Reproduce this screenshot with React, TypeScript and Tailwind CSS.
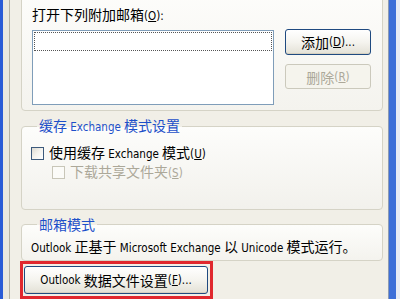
import React from "react";

const CJK = /([\u2E80-\u9FFF\u3000-\u303F\uFF00-\uFFEF]+)/;

function T({ s }: { s: string }) {
  const parts = s.split(CJK).filter((p) => p !== "");
  return (
    <>
      {parts.map((p, i) =>
        CJK.test(p) ? (
          <span key={i} className="text-[14px] font-['Noto_Sans_CJK_SC',sans-serif]">
            {p}
          </span>
        ) : (
          <span key={i} className="text-[11.5px] font-['DejaVu_Sans_Condensed','Liberation_Sans',sans-serif] whitespace-pre">
            {p}
          </span>
        )
      )}
    </>
  );
}

function L({ children }: { children: React.ReactNode }) {
  return (
    <span className="text-[11.5px] font-['DejaVu_Sans_Condensed','Liberation_Sans',sans-serif] whitespace-pre">
      {children}
    </span>
  );
}

function XPButton({
  children,
  disabled,
  className = "",
}: {
  children: React.ReactNode;
  disabled?: boolean;
  className?: string;
}) {
  return (
    <div
      className={
        "flex items-center justify-center rounded-[3px] border leading-[16px] " +
        (disabled
          ? "border-[#cbc9bc] bg-[#f5f4ed] text-[#aca899] "
          : "border-[#1f4a80] bg-gradient-to-b from-[#ffffff] via-[#f5f4ef] to-[#e3e1d6] text-black shadow-[inset_0_-1px_0_#d6d0c0] ") +
        className
      }
    >
      {children}
    </div>
  );
}

function CheckBox({ disabled }: { disabled?: boolean }) {
  return (
    <div
      className={
        "w-[13px] h-[13px] border " +
        (disabled
          ? "border-[#c8c6b8] bg-[#fbfbf8]"
          : "border-[#3c5a7c] bg-gradient-to-br from-[#dcdad2] via-[#f4f3ee] to-[#ffffff]")
      }
    />
  );
}

export default function App() {
  return (
    <div className="w-[400px] h-[299px] overflow-hidden flex bg-[#f1efe7] text-black select-none leading-[16px]">
      <div className="w-[3px] bg-[#2a5cd6]" />
      <div className="w-[6px] bg-[#ebe9df]" />
      <div className="w-px bg-[#b5b3a4]" />
      <div className="flex-1 flex flex-col pl-[11px] pr-[5px]">
        {/* Group 1 (top cut off) */}
        <div className="mt-[-10px] h-[121px] border border-[#d5d3c6] rounded-[4px] bg-gradient-to-b from-[#fdfdfb] to-[#f4f3ee] pt-[15px] pl-[10px]">
          <div className="leading-[16px]">
            <T s="打开下列附加邮箱" />
            <L>
              (<u>O</u>):
            </L>
          </div>
          <div className="flex mt-[6px]">
            <div className="w-[242px] h-[75px] border border-[#7f9db9] bg-white p-px">
              <div className="h-[19px] border border-dotted border-[#555]" />
            </div>
            <div className="ml-[11px] mt-[-1px] flex flex-col gap-[9px]">
              <XPButton className="w-[86px] h-[26px]">
                <T s="添加" />
                <L>
                  (<u>D</u>)...
                </L>
              </XPButton>
              <XPButton disabled className="w-[86px] h-[25px]">
                <T s="删除" />
                <L>
                  (<u>R</u>)
                </L>
              </XPButton>
            </div>
          </div>
        </div>

        {/* Group 2 */}
        <fieldset className="mt-[6px] border border-[#d5d3c6] rounded-[4px] bg-gradient-to-b from-[#fdfdfb] to-[#f2f1ec] pl-[9px] pb-[29px]">
          <legend className="ml-[6px] px-[2px] leading-[16px] text-[#1d50c9]">
            <T s="缓存 Exchange 模式设置" />
          </legend>
          <div className="mt-[10px] flex items-center h-[16px] gap-[5px]">
            <CheckBox />
            <div>
              <T s="使用缓存 Exchange 模式" />
              <L>
                (<u>U</u>)
              </L>
            </div>
          </div>
          <div className="mt-[3px] ml-[21px] flex items-center h-[16px] gap-[5px] text-[#aca899]">
            <CheckBox disabled />
            <div>
              <T s="下载共享文件夹" />
              <L>
                (<u>S</u>)
              </L>
            </div>
          </div>
        </fieldset>

        {/* Group 3 */}
        <fieldset className="mt-[6px] border border-[#d5d3c6] rounded-[4px] bg-gradient-to-b from-[#fdfdfb] to-[#f4f3ee] pl-[9px] pb-[5px]">
          <legend className="ml-[6px] px-[2px] leading-[16px] text-[#1d50c9]">
            <T s="邮箱模式" />
          </legend>
          <div className="mt-[7px] h-[16px] flex items-center">
            <div>
              <T s="Outlook 正基于 Microsoft Exchange 以 Unicode 模式运行。" />
            </div>
          </div>
        </fieldset>

        <div className="ml-[-1px] w-[193px] border-[3px] border-[#e0282e] px-px py-[2px]">
          <XPButton className="w-[184px] h-[28px]">
            <T s="Outlook 数据文件设置" />
            <L>
              (<u>F</u>)...
            </L>
          </XPButton>
        </div>
      </div>
      <div className="w-px bg-[#8d9bb3]" />
      <div className="w-[7px] bg-[#3e6fd8]" />
      <div className="w-[4px] bg-[#e9ecf5]" />
    </div>
  );
}
